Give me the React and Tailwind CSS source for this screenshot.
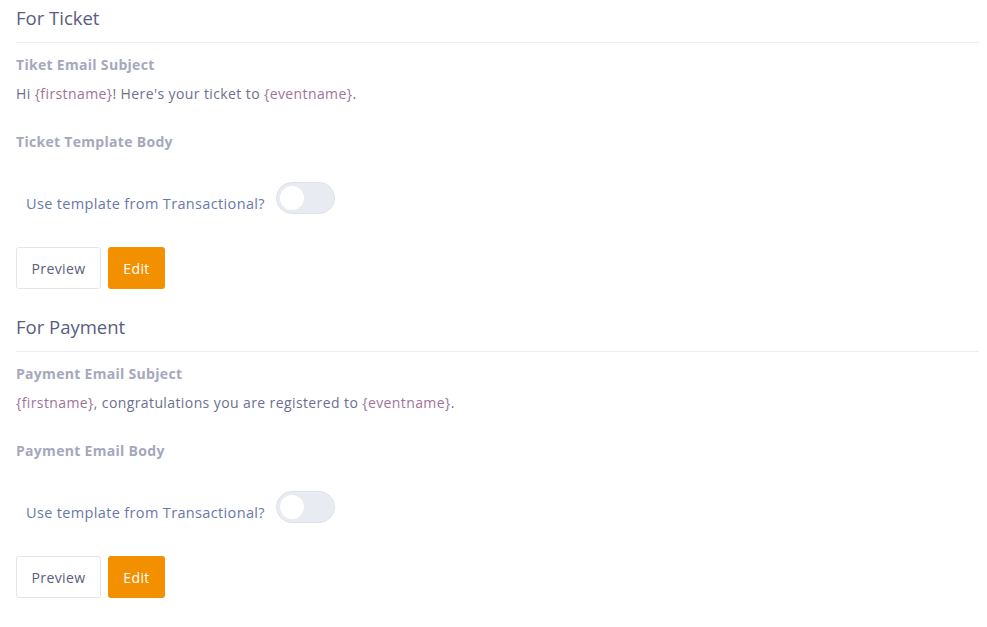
const font = { fontFamily: '"Open Sans", "Liberation Sans", sans-serif' }

// ─── Toggle (off state) ────────────────────────────────
function Toggle() {
  return (
    <span className="flex items-center w-[59px] h-[32px] rounded-full bg-[#e8ebf1] border border-[#dfe2ea] px-[3px]">
      <span className="w-[24px] h-[24px] rounded-full bg-white" />
    </span>
  )
}

// ─── Template section ──────────────────────────────────
function Section({ title, subjectLabel, subject, bodyLabel }) {
  return (
    <div className="flex flex-col">
      <div className="h-[43px] pb-[6px] flex items-center text-[18.5px] text-[#595d7e] font-medium border-b border-[#ebedf2] mr-[8px]">
        {title}
      </div>
      <div className="pt-[12px] text-[14px] tracking-[0.3px] font-bold text-[#a5a8bd] leading-[20px]">{subjectLabel}</div>
      <div className="pt-[9px] text-[14px] tracking-[0.4px] text-[#6c7090] leading-[20px]">{subject}</div>
      <div className="pt-[28px] text-[14px] tracking-[0.3px] font-bold text-[#a5a8bd] leading-[20px]">{bodyLabel}</div>
      <div className="pt-[30px] pl-[10px] flex items-start gap-[11px]">
        <span className="pt-[12px] leading-[20px] text-[14.5px] tracking-[0.35px] text-[#6979a6]">Use template from Transactional?</span>
        <Toggle />
      </div>
      <div className="pt-[33px] flex gap-[7px]">
        <button className="w-[85px] h-[42px] rounded-[3px] border border-[#e2e5ec] bg-white text-[14px] tracking-[0.4px] text-[#595d7e]">Preview</button>
        <button className="w-[57px] h-[42px] rounded-[3px] bg-[#f39000] text-[14px] tracking-[0.4px] text-white">Edit</button>
      </div>
    </div>
  )
}

const brace = (t) => <span className="text-[#a0739a]">{t}</span>

export default function App() {
  return (
    <div className="w-[987px] h-[627px] bg-white pl-[16px] flex flex-col gap-[20px]" style={font}>
      <Section
        title="For Ticket"
        subjectLabel="Tiket Email Subject"
        subject={<>Hi {brace('{firstname}')}! Here's your ticket to {brace('{eventname}')}.</>}
        bodyLabel="Ticket Template Body"
      />
      <Section
        title="For Payment"
        subjectLabel="Payment Email Subject"
        subject={<>{brace('{firstname}')}, congratulations you are registered to {brace('{eventname}')}.</>}
        bodyLabel="Payment Email Body"
      />
    </div>
  )
}
